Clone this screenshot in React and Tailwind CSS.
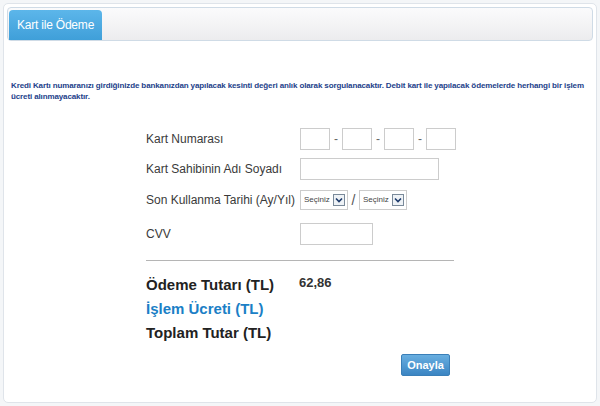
export default function App() {
  return (
    <div className="w-[600px] h-[406px] bg-[#f4f6f8] p-[3px] font-['Liberation_Sans',sans-serif]">
      <div className="h-full rounded-[5px] border border-[#dfe4ea] bg-white p-[3px]">
        <div className="h-[34px] rounded-[4px] border border-[#cfdbe6] bg-gradient-to-b from-[#fbfbfc] to-[#ececee] flex items-end pl-px">
          <div className="h-[30px] w-[93px] rounded-t-[4px] bg-gradient-to-b from-[#5cb6ea] to-[#3f9fd9] text-white text-[12px] tracking-[-0.2px] flex items-center justify-center">
            Kart ile Ödeme
          </div>
        </div>

        <p className="mt-[39px] ml-[4px] w-[582px] text-[8px] leading-[11px] font-bold text-[#23418a] tracking-[-0.12px]">
          Kredi Kartı numaranızı girdiğinizde bankanızdan yapılacak kesinti değeri anlık olarak sorgulanacaktır. Debit kart ile yapılacak ödemelerde herhangi bir işlem ücreti alınmayacaktır.
        </p>

        <div className="ml-[139px] mt-[26px] w-[320px] text-[12px] text-[#3a3a3a]">
          <div className="flex items-center h-[22px]">
            <span className="w-[154px] shrink-0">Kart Numarası</span>
            <div className="flex items-center">
              <input className="w-[30px] h-[22px] border border-[#cccccc] bg-white" />
              <span className="w-[12px] text-center text-[#666]">-</span>
              <input className="w-[30px] h-[22px] border border-[#cccccc] bg-white" />
              <span className="w-[12px] text-center text-[#666]">-</span>
              <input className="w-[30px] h-[22px] border border-[#cccccc] bg-white" />
              <span className="w-[12px] text-center text-[#666]">-</span>
              <input className="w-[30px] h-[22px] border border-[#cccccc] bg-white" />
            </div>
          </div>

          <div className="flex items-center h-[22px] mt-[8px]">
            <span className="w-[154px] shrink-0">Kart Sahibinin Adı Soyadı</span>
            <input className="w-[139px] h-[22px] border border-[#cccccc] bg-white" />
          </div>

          <div className="flex items-center h-[20px] mt-[10px]">
            <span className="w-[154px] shrink-0">Son Kullanma Tarihi (Ay/Yıl)</span>
            <div className="flex items-center">
              <div className="w-[48px] h-[20px] border border-[#cccccc] flex items-center justify-between pl-[3px] pr-[2px]">
                <span className="text-[8px] text-[#444]">Seçiniz</span>
                <span className="w-[12px] h-[12px] border border-[#7a8a9a] bg-[#eef2f6] flex items-center justify-center">
                  <svg width="8" height="6" viewBox="0 0 8 6">
                    <path d="M1 1.5 L4 4.5 L7 1.5" fill="none" stroke="#1d3a6a" strokeWidth="1.6" />
                  </svg>
                </span>
              </div>
              <span className="w-[11px] text-center text-[14px] text-[#555]">/</span>
              <div className="w-[48px] h-[20px] border border-[#cccccc] flex items-center justify-between pl-[3px] pr-[2px]">
                <span className="text-[8px] text-[#444]">Seçiniz</span>
                <span className="w-[12px] h-[12px] border border-[#7a8a9a] bg-[#eef2f6] flex items-center justify-center">
                  <svg width="8" height="6" viewBox="0 0 8 6">
                    <path d="M1 1.5 L4 4.5 L7 1.5" fill="none" stroke="#1d3a6a" strokeWidth="1.6" />
                  </svg>
                </span>
              </div>
            </div>
          </div>

          <div className="flex items-center h-[22px] mt-[13px]">
            <span className="w-[154px] shrink-0">CVV</span>
            <input className="w-[73px] h-[22px] border border-[#cccccc] bg-white" />
          </div>

          <div className="mt-[15px] w-[308px] border-t border-[#b5b5b5]" />

          <div className="mt-[12px] text-[15px] font-bold leading-[24px]">
            <div className="flex items-center">
              <span className="w-[153px] text-[#222]">Ödeme Tutarı (TL)</span>
              <span className="text-[13px] text-[#333] -mt-[4px]">62,86</span>
            </div>
            <div className="text-[#1b7fc6]">İşlem Ücreti (TL)</div>
            <div className="text-[#222]">Toplam Tutar (TL)</div>
          </div>
        </div>

        <div className="flex justify-end mr-[143px] mt-[9px]">
          <button className="w-[49px] h-[22px] rounded-[2px] bg-gradient-to-b from-[#68aee0] to-[#3b85c3] border border-[#3a7fb8] text-white text-[11px] font-bold">
            Onayla
          </button>
        </div>
      </div>
    </div>
  );
}
